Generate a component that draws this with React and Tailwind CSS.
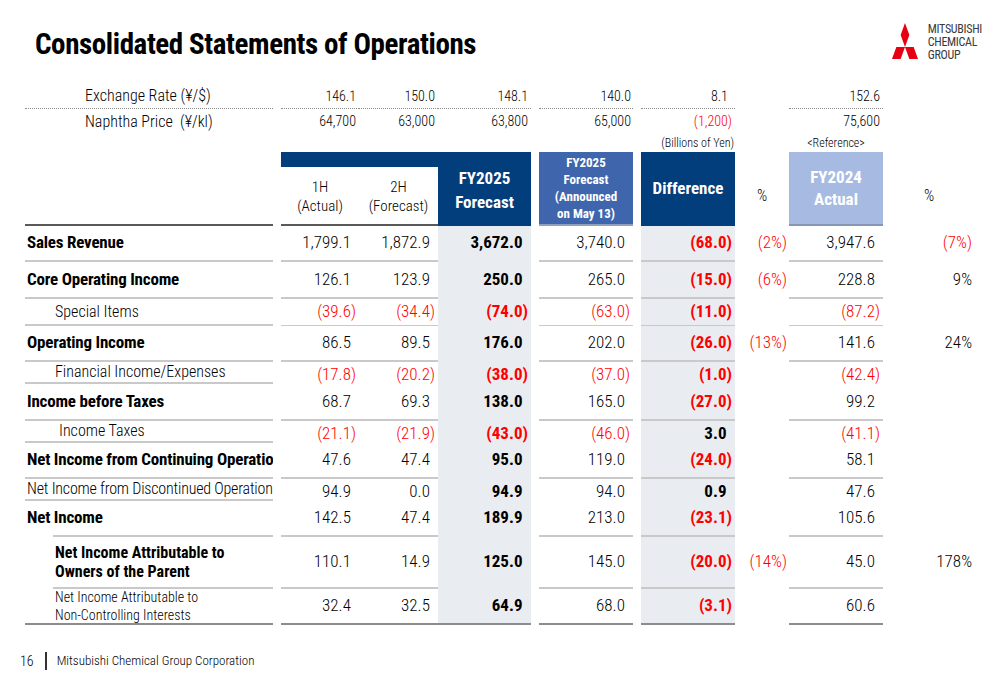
const NAVY = "bg-[#023d7c]";

const rows = [
  { label: ["Sales Revenue"], kind: "bold", h: "h-[36px]", v: ["1,799.1", "1,872.9", "3,672.0", "3,740.0", "(68.0)", "(2%)", "3,947.6", "(7%)"] },
  { label: ["Core Operating Income"], kind: "bold", h: "h-[37px]", v: ["126.1", "123.9", "250.0", "265.0", "(15.0)", "(6%)", "228.8", "9%"] },
  { label: ["Special Items"], kind: "sub", h: "h-[27px]", v: ["(39.6)", "(34.4)", "(74.0)", "(63.0)", "(11.0)", "", "(87.2)", ""] },
  { label: ["Operating Income"], kind: "bold", h: "h-[36px]", v: ["86.5", "89.5", "176.0", "202.0", "(26.0)", "(13%)", "141.6", "24%"] },
  { label: ["Financial Income/Expenses"], kind: "sub", h: "h-[22px]", v: ["(17.8)", "(20.2)", "(38.0)", "(37.0)", "(1.0)", "", "(42.4)", ""] },
  { label: ["Income before Taxes"], kind: "bold", h: "h-[37px]", v: ["68.7", "69.3", "138.0", "165.0", "(27.0)", "", "99.2", ""] },
  { label: ["Income Taxes"], kind: "sub2", h: "h-[22px]", v: ["(21.1)", "(21.9)", "(43.0)", "(46.0)", "3.0", "", "(41.1)", ""] },
  { label: ["Net Income from Continuing Operations"], kind: "bold", h: "h-[36px]", v: ["47.6", "47.4", "95.0", "119.0", "(24.0)", "", "58.1", ""] },
  { label: ["Net Income from Discontinued Operations"], kind: "plain", h: "h-[22px]", v: ["94.9", "0.0", "94.9", "94.0", "0.9", "", "47.6", ""] },
  { label: ["Net Income"], kind: "bold", h: "h-[36px]", indentLine: true, v: ["142.5", "47.4", "189.9", "213.0", "(23.1)", "", "105.6", ""] },
  { label: ["Net Income Attributable to", "Owners of the Parent"], kind: "boldsub", h: "h-[52px]", indentLine: true, v: ["110.1", "14.9", "125.0", "145.0", "(20.0)", "(14%)", "45.0", "178%"] },
  { label: ["Net Income Attributable to", "Non-Controlling Interests"], kind: "small", h: "h-[36px]", last: true, v: ["32.4", "32.5", "64.9", "68.0", "(3.1)", "", "60.6", ""] },
];

const labelStyles = {
  bold: "pl-[2px] font-bold text-[17px] tracking-[-0.2px]",
  sub: "pl-[30px] font-light text-[16px]",
  sub2: "pl-[34px] font-light text-[16px]",
  plain: "pl-[2px] font-light text-[16px] tracking-[-0.2px]",
  boldsub: "pl-[30px] font-bold text-[16px] leading-[19px]",
  small: "pl-[30px] font-light text-[14px] leading-[18px]",
};

function Num({ v, bold, trail = true }) {
  if (!v) return null;
  const neg = v.startsWith("(");
  return (
    <span className={`${neg ? "text-[#ff0000]" : "text-black"} ${bold ? "font-bold" : "font-light"} whitespace-nowrap`}>
      {v}
      {!neg && trail ? <span className="invisible">)</span> : null}
    </span>
  );
}

function Cell({ w, line, bg = "", children, pr = "pr-[3px]" }) {
  return (
    <div className={`${w} ${bg} flex flex-col`}>
      <div className={`flex-1 flex items-center justify-end ${pr} text-[17px]`}>{children}</div>
      <div className={`h-[2px] ${line}`} />
    </div>
  );
}

function BodyRow({ r }) {
  const line = r.last ? "bg-[#8c8c8c]" : "bg-[#c9c9c9]";
  const f25line = r.last ? "bg-[#8c8c8c]" : "bg-transparent";
  return (
    <div className={`flex ${r.h}`}>
      <div className="w-[248px] flex flex-col">
        <div className={`flex-1 flex flex-col justify-center overflow-hidden whitespace-nowrap ${labelStyles[r.kind]}`}>
          {r.label.map((l) => (
            <div key={l}>{l}</div>
          ))}
        </div>
        <div className={`h-[2px] ${line} ${r.indentLine ? "ml-[28px]" : ""}`} />
      </div>
      <div className="w-[8px]" />
      <Cell w="w-[78px]" line={line}><Num v={r.v[0]} /></Cell>
      <Cell w="w-[79px]" line={line}><Num v={r.v[1]} /></Cell>
      <Cell w="w-[93px]" line={f25line} bg="bg-[#e9edf2]"><Num v={r.v[2]} bold /></Cell>
      <div className="w-[8px]" />
      <Cell w="w-[94px]" line={line}><Num v={r.v[3]} /></Cell>
      <div className="w-[8px]" />
      <Cell w="w-[94px]" line={line} bg="bg-[#e9edf2]"><Num v={r.v[4]} bold /></Cell>
      <Cell w="w-[54px]" line="bg-transparent" pr="pr-[2px]"><Num v={r.v[5]} trail={false} /></Cell>
      <Cell w="w-[94px]" line={line}><Num v={r.v[6]} /></Cell>
      <Cell w="w-[92px]" line="bg-transparent" pr="pr-[3px]"><Num v={r.v[7]} trail={false} /></Cell>
    </div>
  );
}

function Logo() {
  return (
    <div className="self-start flex items-center gap-[10px] mt-[20px]">
      <svg width="26" height="36" viewBox="-1.5 -1.732 3 2.598" preserveAspectRatio="none">
        <polygon points="0,0 0.5,-0.866 0,-1.732 -0.5,-0.866" fill="#e60012" />
        <polygon points="0,0 0.5,0.866 1.5,0.866 1,0" fill="#e60012" />
        <polygon points="0,0 -0.5,0.866 -1.5,0.866 -1,0" fill="#e60012" />
      </svg>
      <div className="pt-[3px] text-[12px] leading-[13px] text-[#3a3a3a] font-normal tracking-[-0.3px]">
        <div>MITSUBISHI</div>
        <div>CHEMICAL</div>
        <div>GROUP</div>
      </div>
    </div>
  );
}

function ExRow({ label, v, dotted }) {
  const b = dotted ? "border-b border-dotted border-[#8a8a8a]" : "";
  return (
    <div className="flex h-[25px] text-[14px]">
      <div className={`w-[248px] pl-[60px] flex items-center text-[16px] font-light whitespace-pre ${b}`}>{label}</div>
      <div className="w-[8px]" />
      <div className={`w-[78px] flex items-center justify-end pr-[3px] font-light ${b}`}>{v[0]}</div>
      <div className={`w-[79px] flex items-center justify-end pr-[3px] font-light ${b}`}>{v[1]}</div>
      <div className={`w-[93px] flex items-center justify-end pr-[3px] font-light ${b}`}>{v[2]}</div>
      <div className="w-[8px]" />
      <div className={`w-[94px] flex items-center justify-end pr-[2px] font-light ${b}`}>{v[3]}</div>
      <div className="w-[8px]" />
      <div className={`w-[94px] flex items-center justify-end pr-[3px] font-light ${b}`}>
        <Num v={v[4]} />
      </div>
      <div className="w-[54px]" />
      <div className={`w-[94px] flex items-center justify-end pr-[3px] font-light ${b}`}>{v[5]}</div>
    </div>
  );
}

export default function App() {
  return (
    <div className="w-[1000px] h-[685px] bg-white text-black font-['Roboto_Condensed',sans-serif] overflow-hidden flex flex-col">
      <div className="flex justify-between h-[84px] pr-[18px]">
        <h1 className="pl-[35px] pt-[26px] text-[29px] leading-[36px] font-bold tracking-[-0.4px]">
          Consolidated Statements of Operations
        </h1>
        <Logo />
      </div>
      <div className="pl-[25px] flex flex-col">
        <ExRow label="Exchange Rate (¥/$)" v={["146.1", "150.0", "148.1", "140.0", "8.1", "152.6"]} dotted />
        <ExRow label="Naphtha Price  (¥/kl)" v={["64,700", "63,000", "63,800", "65,000", "(1,200)", "75,600"]} />
        <div className="flex h-[18px] text-[12px] font-light leading-[18px]">
          <div className="w-[248px]" />
          <div className="w-[8px]" />
          <div className="w-[250px]" />
          <div className="w-[8px]" />
          <div className="w-[94px]" />
          <div className="w-[8px]" />
          <div className="w-[94px] text-right pr-[1px] whitespace-nowrap">(Billions of Yen)</div>
          <div className="w-[54px]" />
          <div className="w-[94px] text-center">&lt;Reference&gt;</div>
        </div>
        <div className="flex h-[74px]">
          <div className="w-[248px] border-b-2 border-[#5a5a5a]" />
          <div className="w-[8px]" />
          <div className="w-[157px] flex flex-col border-b-2 border-[#5a5a5a]">
            <div className={`h-[15px] ${NAVY}`} />
            <div className="flex-1 flex text-[15px] leading-[19px] font-light">
              <div className="w-[78px] flex flex-col items-center justify-center pt-[2px]">
                <div>1H</div>
                <div>(Actual)</div>
              </div>
              <div className="w-[79px] flex flex-col items-center justify-center pt-[2px]">
                <div>2H</div>
                <div>(Forecast)</div>
              </div>
            </div>
          </div>
          <div className={`w-[93px] ${NAVY} text-white font-bold text-[17px] leading-[24px] flex flex-col items-center justify-center pt-[2px]`}>
            <div>FY2025</div>
            <div>Forecast</div>
          </div>
          <div className="w-[8px]" />
          <div className="w-[94px] bg-[#3f66ad] border-b-2 border-[#8fa0bf] text-white font-bold text-[13px] leading-[17px] flex flex-col items-center justify-center">
            <div>FY2025</div>
            <div>Forecast</div>
            <div>(Announced</div>
            <div>on May 13)</div>
          </div>
          <div className="w-[8px]" />
          <div className={`w-[94px] ${NAVY} text-white font-bold text-[17px] flex items-center justify-center`}>
            Difference
          </div>
          <div className="w-[54px] flex items-center justify-center pt-[14px] text-[16px] font-light">%</div>
          <div className="w-[94px] bg-[#a7bbe2] border-b-2 border-[#8797b6] text-white font-bold text-[17px] leading-[22px] flex flex-col items-center justify-center">
            <div>FY2024</div>
            <div>Actual</div>
          </div>
          <div className="w-[92px] flex items-center justify-center pt-[14px] text-[16px] font-light">%</div>
        </div>
        {rows.map((r) => (
          <BodyRow key={r.label.join(" ")} r={r} />
        ))}
      </div>
      <div className="flex items-center h-[20px] mt-[26px] pl-[20px] text-[13px] font-light">
        <span className="text-[14px]">16</span>
        <div className="ml-[11px] w-[2px] h-[18px] bg-[#333]" />
        <span className="ml-[10px]">Mitsubishi Chemical Group Corporation</span>
      </div>
    </div>
  );
}
